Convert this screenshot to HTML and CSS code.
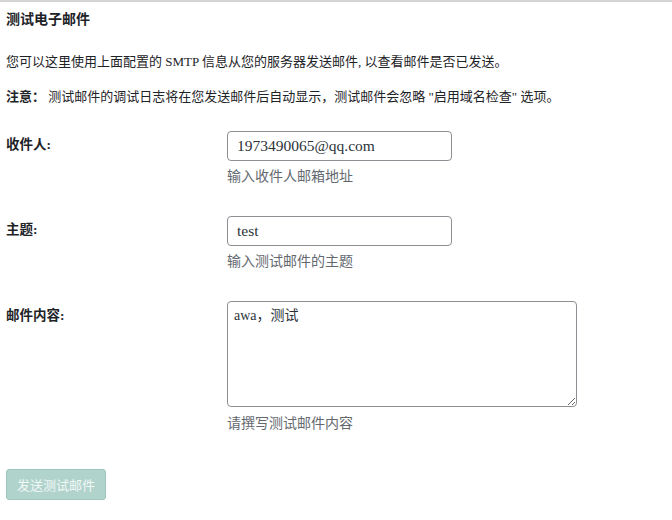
FILE: index.html
```html
<!DOCTYPE html>
<html lang="zh-CN">
<head>
<meta charset="utf-8">
<title>测试电子邮件</title>
<link rel="stylesheet" href="styles.css">
</head>
<body>
<div class="page">
  <h2 class="title">测试电子邮件</h2>
  <p class="intro">您可以这里使用上面配置的 SMTP 信息从您的服务器发送邮件, 以查看邮件是否已发送。</p>
  <p class="note"><strong>注意：</strong> 测试邮件的调试日志将在您发送邮件后自动显示，测试邮件会忽略 "启用域名检查" 选项。</p>

  <div class="form">
    <div class="row">
      <label class="label" for="to">收件人:</label>
      <div class="field">
        <input id="to" class="input" type="text" value="1973490065@qq.com">
        <p class="desc">输入收件人邮箱地址</p>
      </div>
    </div>
    <div class="row">
      <label class="label" for="subject">主题:</label>
      <div class="field">
        <input id="subject" class="input" type="text" value="test">
        <p class="desc">输入测试邮件的主题</p>
      </div>
    </div>
    <div class="row">
      <label class="label label-area" for="body">邮件内容:</label>
      <div class="field">
        <textarea id="body" class="area">awa，测试</textarea>
        <p class="desc desc-area">请撰写测试邮件内容</p>
      </div>
    </div>
  </div>

  <button class="send" type="button" disabled>发送测试邮件</button>
</div>
</body>
</html>
```

FILE: styles.css
```css
html, body {
  margin: 0;
  padding: 0;
  background: #ffffff;
}

body {
  font-family: "Liberation Serif", "Noto Sans CJK SC", serif;
  color: #1d2327;
  font-size: 13px;
}

.page {
  border-top: 2px solid #d4d4d4;
  padding: 0 6px;
}

.title {
  font-family: "Liberation Sans", "Noto Sans CJK SC", sans-serif;
  font-size: 14px;
  font-weight: 700;
  line-height: 16px;
  margin: 9px 0 0;
  color: #1d2327;
}

.intro {
  margin: 25px 0 0;
  line-height: 20px;
}

.note {
  margin: 15px 0 0;
  line-height: 20px;
}

.note strong {
  font-weight: 700;
}

.form {
  margin-top: 24px;
  display: flex;
  flex-direction: column;
  gap: 29px;
}

.row {
  display: grid;
  grid-template-columns: 221px 1fr;
}

.label {
  font-weight: 700;
  font-size: 13.5px;
  line-height: 20px;
  padding-top: 4px;
}

.label-area {
  padding-top: 5px;
}

.field {
  display: flex;
  flex-direction: column;
  align-items: flex-start;
}

.input {
  box-sizing: border-box;
  width: 225px;
  height: 30px;
  border: 1px solid #8c8f94;
  border-radius: 4px;
  padding: 0 9px;
  font-family: "Liberation Serif", "Noto Sans CJK SC", serif;
  font-size: 15.5px;
  color: #2c3338;
  background: #fff;
  margin: 0;
}

.area {
  box-sizing: border-box;
  width: 350px;
  height: 106px;
  border: 1px solid #8c8f94;
  border-radius: 4px;
  padding: 4px 6px;
  font-family: "Liberation Serif", "Noto Sans CJK SC", serif;
  font-size: 14px;
  line-height: 20px;
  color: #2c3338;
  background: #fff;
  margin: 0;
  resize: both;
}

.desc {
  margin: 6px 0 0;
  line-height: 20px;
  font-size: 14px;
  color: #646970;
}

.desc-area {
  margin-top: 7px;
}

.send {
  display: block;
  margin-top: 35px;
  width: 100px;
  height: 31px;
  border: 1px solid #9fc7bf;
  border-radius: 3px;
  background: #b0d3cc;
  color: #f2f8f7;
  font-family: "Liberation Serif", "Noto Sans CJK SC", serif;
  font-size: 13px;
  padding: 0;
}
```
